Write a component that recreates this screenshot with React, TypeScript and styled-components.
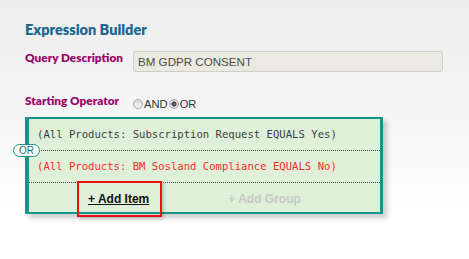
import React from 'react';
import styled, { createGlobalStyle } from 'styled-components';

const GlobalStyle = createGlobalStyle`
  html, body {
    margin: 0;
    padding: 0;
  }
  body {
    background: linear-gradient(#ededed 0px, #f6f6f6 120px, #ffffff 215px) no-repeat;
    background-color: #ffffff;
    min-height: 259px;
    font-family: "Lato", "Liberation Sans", sans-serif;
  }
`;

const Page = styled.div`
  padding: 22px 0 0 25px;
  width: 444px;
  height: 237px;
`;

const Title = styled.h2`
  margin: 0;
  font-size: 14.5px;
  line-height: 16px;
  font-weight: 800;
  color: #1b6792;
`;

const FieldRow = styled.div<{ $top: number }>`
  display: flex;
  align-items: flex-start;
  margin-top: ${(p) => p.$top}px;
`;

const Label = styled.div`
  width: 108px;
  flex: none;
  font-size: 11.8px;
  line-height: 14px;
  font-weight: 800;
  color: #9a086a;
`;

const TextInput = styled.div`
  box-sizing: border-box;
  width: 310px;
  height: 21px;
  padding: 0 4px;
  border: 1px solid #cfcfc4;
  border-radius: 3px;
  background: #ebeae2;
  font-family: "Liberation Sans", Arial, sans-serif;
  font-size: 11.6px;
  line-height: 20px;
  color: #4a4a4a;
`;

const RadioGroup = styled.div`
  display: flex;
  align-items: center;
  padding-top: 3px;
  font-family: "Liberation Sans", Arial, sans-serif;
  font-size: 11.2px;
  line-height: 14px;
  color: #333;
`;

const RadioOption = styled.label`
  display: inline-flex;
  align-items: center;
  margin-right: 1px;
`;

const RadioDot = styled.span<{ $checked?: boolean }>`
  box-sizing: border-box;
  width: 10px;
  height: 10px;
  margin-right: 1px;
  border-radius: 50%;
  border: 1px solid #a4a4a4;
  background: ${(p) =>
    p.$checked
      ? 'radial-gradient(circle, #555 0 2.4px, #e4e4e4 2.9px)'
      : 'linear-gradient(#dcdcdc, #f6f6f6)'};
`;

const Panel = styled.div`
  position: relative;
  box-sizing: border-box;
  width: 358px;
  margin-top: 6px;
  border: 2px solid #14978a;
  border-left-width: 4px;
  border-right-width: 3px;
  background: #dff0d8;
  box-shadow: 4px 4px 5px rgba(0, 0, 0, 0.2);
`;

const Condition = styled.div<{ $tone: 'ok' | 'warn' }>`
  position: relative;
  height: 31px;
  padding-left: 8px;
  border-bottom: 1px dotted #4a4a4a;
  font-family: "DejaVu Sans Mono", "Liberation Mono", monospace;
  font-size: 10.6px;
  line-height: 31px;
  white-space: nowrap;
  color: ${(p) => (p.$tone === 'warn' ? '#fb2a2a' : '#3a3f45')};
`;

const JoinPill = styled.span`
  position: absolute;
  left: -16px;
  bottom: -7px;
  padding: 0 5px;
  height: 11px;
  border: 1.5px solid #14978a;
  border-radius: 7px;
  background: #ffffff;
  font-family: "Liberation Sans", Arial, sans-serif;
  font-size: 10px;
  line-height: 11px;
  color: #19746b;
`;

const Footer = styled.div`
  display: flex;
  align-items: center;
  height: 29px;
  padding-left: 48px;
  font-family: "Liberation Sans", Arial, sans-serif;
  font-size: 12px;
  font-weight: 700;
`;

const AddButton = styled.span<{ $disabled?: boolean; $highlight?: boolean }>`
  position: relative;
  padding: 0 ${(p) => (p.$disabled ? 0 : 13)}px 0 ${(p) => (p.$disabled ? 0 : 11)}px;
  margin-top: 3px;
  color: ${(p) => (p.$disabled ? '#c6c9c4' : '#111')};
  text-decoration: ${(p) => (p.$disabled ? 'none' : 'underline')};
  cursor: pointer;

  &::after {
    content: '';
    display: ${(p) => (p.$highlight ? 'block' : 'none')};
    position: absolute;
    left: 0;
    right: 0;
    top: -11px;
    height: 36px;
    box-sizing: border-box;
    border: 2px solid #ee1111;
    box-shadow: 2px 2px 3px rgba(0, 0, 0, 0.18);
  }
`;

const Spacer = styled.span`
  width: 66px;
`;

const App = () => {
  return (
    <>
      <GlobalStyle />
      <Page>
        <Title>Expression Builder</Title>
        <FieldRow $top={13}>
          <Label>Query Description</Label>
          <TextInput>BM GDPR CONSENT</TextInput>
        </FieldRow>
        <FieldRow $top={22}>
          <Label>Starting Operator</Label>
          <RadioGroup>
            <RadioOption>
              <RadioDot />
              AND
            </RadioOption>
            <RadioOption>
              <RadioDot $checked />
              OR
            </RadioOption>
          </RadioGroup>
        </FieldRow>
        <Panel>
          <Condition $tone="ok">
            (All Products: Subscription Request EQUALS Yes)
            <JoinPill>OR</JoinPill>
          </Condition>
          <Condition $tone="warn">(All Products: BM Sosland Compliance EQUALS No)</Condition>
          <Footer>
            <AddButton $highlight>+ Add Item</AddButton>
            <Spacer />
            <AddButton $disabled>+ Add Group</AddButton>
          </Footer>
        </Panel>
      </Page>
    </>
  );
};

export default App;
